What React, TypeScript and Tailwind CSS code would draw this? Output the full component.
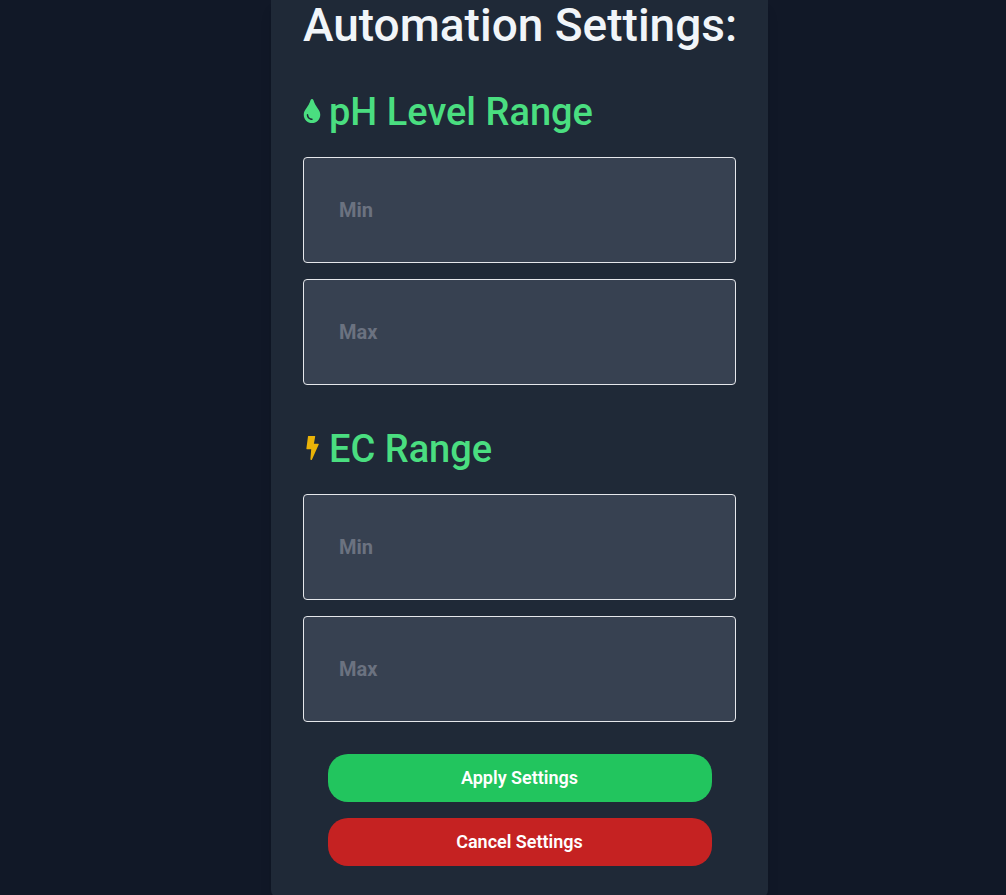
import React from "react";
import { FaTint } from "react-icons/fa";

type RangeSectionProps = {
  id: string;
  title: string;
  icon: React.ReactNode;
};

function BoltIcon() {
  return (
    <svg viewBox="0 0 18 24" fill="currentColor" aria-hidden="true" className="h-6 w-[18px] shrink-0 text-[#eab308]">
      <path d="M5 .3Q5 0 5.4 0H11.8Q12.3 0 12.2.5L10.9 7.8H15.2Q16 7.8 15.7 8.6L9 23.4Q8.7 24 8.1 24Q7.4 24 7.4 23.2L8.2 13.2H3.9Q3.3 13.2 3.4 12.6Z" />
    </svg>
  );
}

function RangeSection({ id, title, icon }: RangeSectionProps) {
  return (
    <section>
      <h2 className="flex h-12 items-center gap-2 whitespace-nowrap text-[38px] leading-none font-medium text-[#4ade80]">
        <span className="pb-0.5">{icon}</span>
        {title}
      </h2>
      <div className="mt-[21px] flex flex-col gap-4">
        {["Min", "Max"].map((bound) => (
          <input
            key={bound}
            id={`${id}-${bound.toLowerCase()}`}
            type="text"
            placeholder={bound}
            aria-label={`${title} ${bound}`}
            className="h-[106px] w-full rounded border border-gray-200 bg-[#374151] px-[35px] text-xl font-bold text-white placeholder:text-[#6b7280]"
          />
        ))}
      </div>
    </section>
  );
}

export default function App() {
  return (
    <div className="flex h-screen items-start justify-center overflow-hidden bg-[#111827] pl-[33px] font-['Roboto',sans-serif]">
      <main className="w-full max-w-[497px] shrink-0 rounded-b-lg bg-[#1f2937] px-8 pb-8 shadow-lg">
        <h1 className="whitespace-nowrap text-[46px] leading-[50px] font-medium text-slate-100">
          Automation Settings:
        </h1>
        <form className="mt-[38px]" onSubmit={(event) => event.preventDefault()}>
          <div className="flex flex-col gap-10">
            <RangeSection
              id="ph"
              title="pH Level Range"
              icon={<FaTint aria-hidden="true" className="h-6 w-[18px] shrink-0" />}
            />
            <RangeSection id="ec" title="EC Range" icon={<BoltIcon />} />
          </div>
          <div className="mt-8 flex flex-col items-center gap-4">
            <button
              type="submit"
              className="h-12 w-full max-w-96 rounded-[20px] bg-[#22c55e] text-lg font-semibold text-white"
            >
              Apply Settings
            </button>
            <button
              type="button"
              className="h-12 w-full max-w-96 rounded-[20px] bg-[#c52222] text-lg font-semibold text-white"
            >
              Cancel Settings
            </button>
          </div>
        </form>
      </main>
    </div>
  );
}
